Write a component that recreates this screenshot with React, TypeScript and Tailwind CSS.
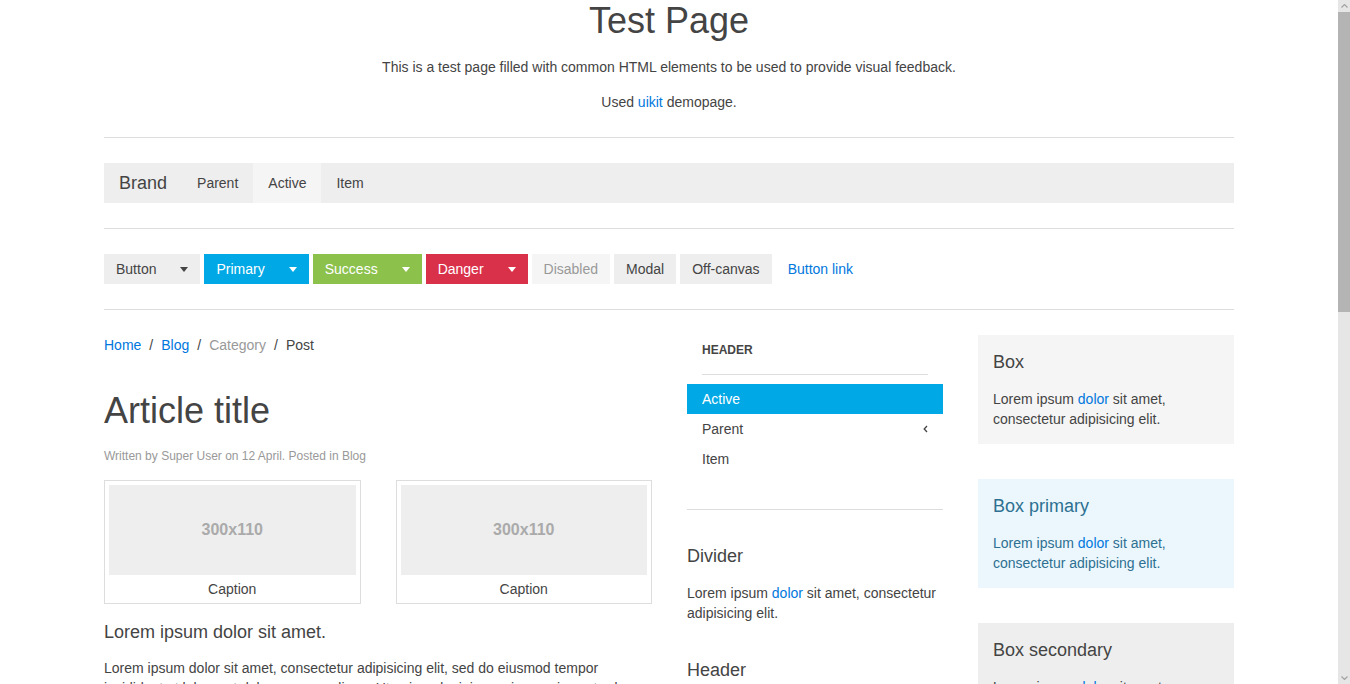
import type { ReactNode } from "react";

const Caret = () => (
  <span className="inline-block w-0 h-0 border-x-[4px] border-t-[5px] border-x-transparent border-t-current" />
);

const Chevron = () => (
  <svg width="5" height="8" viewBox="0 0 5 8" className="text-[#444]">
    <path d="M4 1 L1.2 4 L4 7" fill="none" stroke="currentColor" strokeWidth="1.3" />
  </svg>
);

const ScrollArrow = ({ down }: { down?: boolean }) => (
  <div className="h-[12px] flex items-center justify-center bg-[#e6e6e6]">
    <svg width="7" height="4" viewBox="0 0 7 4" className="text-[#a3a3a3]">
      <path d={down ? "M0.5 0.5 L3.5 3.5 L6.5 0.5" : "M0.5 3.5 L3.5 0.5 L6.5 3.5"} fill="none" stroke="currentColor" strokeWidth="1.2" />
    </svg>
  </div>
);

const DropButton = ({ label, cls }: { label: string; cls: string }) => (
  <div className={`flex h-[30px] ${cls}`}>
    <span className="px-3 leading-[30px]">{label}</span>
    <span className="flex items-center px-3">
      <Caret />
    </span>
  </div>
);

const Box = ({
  title,
  cls,
  children,
}: {
  title: string;
  cls: string;
  children: ReactNode;
}) => (
  <div className={`p-[15px] ${cls}`}>
    <h3 className="text-[18px] leading-[24px]">{title}</h3>
    <p className="mt-[15px]">{children}</p>
  </div>
);

const Figure = () => (
  <figure className="border border-[#ddd] p-1">
    <div className="h-[90px] bg-[#eee] flex items-center justify-center text-[16px] font-bold text-[#aaa]">
      300x110
    </div>
    <figcaption className="pt-1 text-center">Caption</figcaption>
  </figure>
);

const Lorem = () => (
  <>
    Lorem ipsum <a className="text-[#07d]">dolor</a> sit amet, consectetur adipisicing elit.
  </>
);

const App = () => {
  return (
    <div className="flex h-screen overflow-hidden bg-white font-['Liberation_Sans',Arial,sans-serif] text-[14px] leading-[20px] text-[#444]">
      <main className="flex-1 overflow-hidden">
        <div className="mx-auto w-[1130px] pb-[60px]">
          {/* header */}
          <div className="text-center">
            <h1 className="text-[36px] leading-[42px]">Test Page</h1>
            <p className="mt-[15px]">
              This is a test page filled with common HTML elements to be used to provide visual feedback.
            </p>
            <p className="mt-[15px]">
              Used <a className="text-[#07d]">uikit</a> demopage.
            </p>
          </div>

          <hr className="my-[25px] border-[#ddd]" />

          {/* navbar */}
          <nav className="flex h-10 bg-[#eee] leading-10">
            <span className="px-[15px] text-[18px]">Brand</span>
            <span className="px-[15px]">Parent</span>
            <span className="px-[15px] bg-[#f5f5f5]">Active</span>
            <span className="px-[15px]">Item</span>
          </nav>

          <hr className="my-[25px] border-[#ddd]" />

          {/* buttons */}
          <div className="flex gap-1 items-center">
            <DropButton label="Button" cls="bg-[#eee] text-[#444]" />
            <DropButton label="Primary" cls="bg-[#00a8e6] text-white" />
            <DropButton label="Success" cls="bg-[#8cc14c] text-white" />
            <DropButton label="Danger" cls="bg-[#da314b] text-white" />
            <span className="px-3 leading-[30px] bg-[#f5f5f5] text-[#999]">Disabled</span>
            <span className="px-3 leading-[30px] bg-[#eee]">Modal</span>
            <span className="px-3 leading-[30px] bg-[#eee]">Off-canvas</span>
            <span className="px-3 leading-[30px] text-[#07d]">Button link</span>
          </div>

          <hr className="my-[25px] border-[#ddd]" />

          <div className="grid grid-cols-[548px_256px_256px] gap-x-[35px] items-start">
            {/* article */}
            <article>
              <ul className="flex">
                <li className="text-[#07d]">Home</li>
                <li className="mx-2">/</li>
                <li className="text-[#07d]">Blog</li>
                <li className="mx-2">/</li>
                <li className="text-[#999]">Category</li>
                <li className="mx-2">/</li>
                <li>Post</li>
              </ul>
              <h1 className="mt-[35px] text-[36px] leading-[42px]">Article title</h1>
              <p className="mt-[15px] text-[12px] leading-[18px] text-[#999]">
                Written by Super User on 12 April. Posted in Blog
              </p>
              <div className="mt-[15px] grid grid-cols-2 gap-x-[35px]">
                <Figure />
                <Figure />
              </div>
              <h3 className="mt-[16px] text-[18px] leading-[24px]">Lorem ipsum dolor sit amet.</h3>
              <p className="mt-[14px]">
                Lorem ipsum dolor sit amet, consectetur adipisicing elit, sed do eiusmod tempor incididunt ut
                labore et dolore magna aliqua. Ut enim ad minim veniam, quis nostrud exercitation ullamco laboris
                nisi ut aliquip ex ea commodo consequat.
              </p>
            </article>

            {/* side nav */}
            <div>
              <ul>
                <li className="px-[15px] py-[5px] text-[12px] font-bold uppercase">Header</li>
                <li className="mx-[15px] my-[9px] border-t border-[#ddd]" />
                <li className="px-[15px] py-[5px] bg-[#00a8e6] text-white">Active</li>
                <li className="px-[15px] py-[5px] flex items-center justify-between">
                  Parent
                  <Chevron />
                </li>
                <li className="px-[15px] py-[5px]">Item</li>
              </ul>
              <hr className="mt-[35px] border-[#ddd]" />
              <div className="mt-[34px]">
                <h3 className="text-[18px] leading-[24px]">Divider</h3>
                <p className="mt-[15px]">
                  <Lorem />
                </p>
              </div>
              <div className="mt-[35px]">
                <h3 className="text-[18px] leading-[24px]">Header</h3>
                <p className="mt-[15px]">
                  <Lorem />
                </p>
              </div>
            </div>

            {/* boxes */}
            <div className="flex flex-col gap-[35px]">
              <Box title="Box" cls="bg-[#f5f5f5]">
                <Lorem />
              </Box>
              <Box title="Box primary" cls="bg-[#ebf7fd] text-[#2d7091]">
                <Lorem />
              </Box>
              <Box title="Box secondary" cls="bg-[#eee]">
                <Lorem />
              </Box>
            </div>
          </div>
        </div>
      </main>

      {/* page scrollbar */}
      <aside className="w-[12px] flex flex-col bg-[#e6e6e6]">
        <ScrollArrow />
        <div className="h-[300px] bg-[#b4b4b4]" />
        <div className="flex-1" />
        <ScrollArrow down />
      </aside>
    </div>
  );
};

export default App;
